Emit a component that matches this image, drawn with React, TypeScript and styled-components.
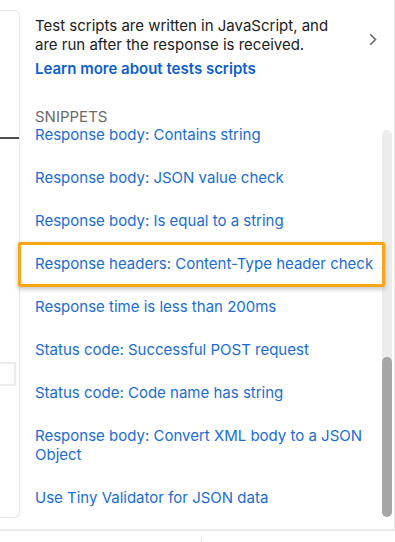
import React from 'react';
import styled, { createGlobalStyle } from 'styled-components';

const snippets = [
  'Response body: Contains string',
  'Response body: JSON value check',
  'Response body: Is equal to a string',
  'Response headers: Content-Type header check',
  'Response time is less than 200ms',
  'Status code: Successful POST request',
  'Status code: Code name has string',
  'Response body: Convert XML body to a JSON Object',
  'Use Tiny Validator for JSON data',
];

const highlighted = 'Response headers: Content-Type header check';

const App = () => {
  return (
    <Page>
      <GlobalStyle />
      <Main>
        <LeftStrip>
          <LeftCard>
            <DarkRule />
            <StubInput />
          </LeftCard>
        </LeftStrip>
        <Panel>
          <Intro>
            <IntroText>
              <Description>
                Test scripts are written in JavaScript, and are run after the response is received.
              </Description>
              <LearnMore href='#'>Learn more about tests scripts</LearnMore>
            </IntroText>
            <Chevron width='8' height='13' viewBox='0 0 8 13'>
              <polyline points='1.2,1.2 6.5,6.5 1.2,11.8' fill='none' stroke='#6b6b6b' strokeWidth='1.6' />
            </Chevron>
          </Intro>
          <SectionLabel>Snippets</SectionLabel>
          <ListArea>
            <Viewport>
              {snippets.map((s) => (
                <SnippetItem key={s} $highlighted={s === highlighted}>
                  {s}
                </SnippetItem>
              ))}
            </Viewport>
            <Track>
              <Thumb />
            </Track>
          </ListArea>
        </Panel>
      </Main>
      <Footer>
        <Tick />
      </Footer>
    </Page>
  );
};

export default App;

const GlobalStyle = createGlobalStyle`
  * {
    box-sizing: border-box;
  }
  body {
    margin: 0;
    background: #ffffff;
    font-family: Inter, 'Noto Sans', 'Liberation Sans', sans-serif;
  }
`;

const Page = styled.div`
  width: 395px;
  height: 542px;
  overflow: hidden;
  display: flex;
  flex-direction: column;
  background: #ffffff;
`;

const Main = styled.div`
  display: flex;
  height: 531px;
  border-bottom: 2px solid #ebebeb;
`;

const LeftStrip = styled.div`
  width: 20px;
  flex-shrink: 0;
  padding-top: 10px;
`;

const LeftCard = styled.div`
  height: 508px;
  border: 1px solid #e6e6e6;
  border-left: none;
  border-radius: 0 6px 6px 0;
  display: flex;
  flex-direction: column;
`;

const DarkRule = styled.div`
  height: 2px;
  margin-top: 126px;
  background: #4d4d4d;
`;

const StubInput = styled.div`
  width: 16px;
  height: 24px;
  margin-top: 223px;
  border: 2px solid #ebebeb;
  border-left: none;
`;

const Panel = styled.div`
  flex: 1;
  display: flex;
  flex-direction: column;
  border-right: 1px solid #e8e8e8;
  padding-top: 16px;
  min-width: 0;
`;

const Intro = styled.div`
  display: flex;
  align-items: flex-start;
  padding: 0 17px 0 15px;
`;

const IntroText = styled.div`
  flex: 1;
  display: flex;
  flex-direction: column;
  gap: 5px;
`;

const Description = styled.p`
  margin: 0;
  font-size: 15px;
  line-height: 19px;
  color: #212121;
`;

const LearnMore = styled.a`
  font-size: 15px;
  line-height: 19px;
  font-weight: 600;
  color: #0b5fd3;
  text-decoration: none;
`;

const Chevron = styled.svg`
  flex-shrink: 0;
  margin: 17px 0 0 16px;
`;

const SectionLabel = styled.div`
  margin-top: 31px;
  padding-left: 15px;
  font-size: 15px;
  line-height: 16px;
  text-transform: uppercase;
  color: #6b6b6b;
`;

const ListArea = styled.div`
  flex: 1;
  min-height: 0;
  display: flex;
  padding: 0 2px 10px 0;
`;

const Viewport = styled.div`
  flex: 1;
  min-width: 0;
  display: flex;
  flex-direction: column;
  justify-content: flex-end;
  overflow-x: visible;
  overflow-y: clip;
`;

const SnippetItem = styled.div<{ $highlighted?: boolean }>`
  position: relative;
  flex-shrink: 0;
  padding: 12px 6px 12px 15px;
  font-size: 15px;
  line-height: 19px;
  color: #1a6dd6;
  cursor: pointer;

  ${({ $highlighted }) =>
    $highlighted &&
    `
    &::after {
      content: '';
      position: absolute;
      top: 0;
      bottom: -2px;
      left: -2px;
      right: -3px;
      border: 3px solid #f6a716;
      border-radius: 2px;
      box-shadow: 0 2px 5px rgba(0, 0, 0, 0.25);
      pointer-events: none;
    }
  `}
`;

const Track = styled.div`
  width: 10px;
  flex-shrink: 0;
  margin: 5px 0 2px;
  border-radius: 5px;
  background: #ececec;
  display: flex;
  flex-direction: column;
  justify-content: flex-end;
`;

const Thumb = styled.div`
  height: 160px;
  border-radius: 5px;
  background: #a6a6a6;
`;

const Footer = styled.div`
  flex: 1;
  display: flex;
  justify-content: center;
  align-items: flex-end;
  padding-left: 7px;
`;

const Tick = styled.div`
  width: 1px;
  height: 4px;
  background: #dcdcdc;
`;
